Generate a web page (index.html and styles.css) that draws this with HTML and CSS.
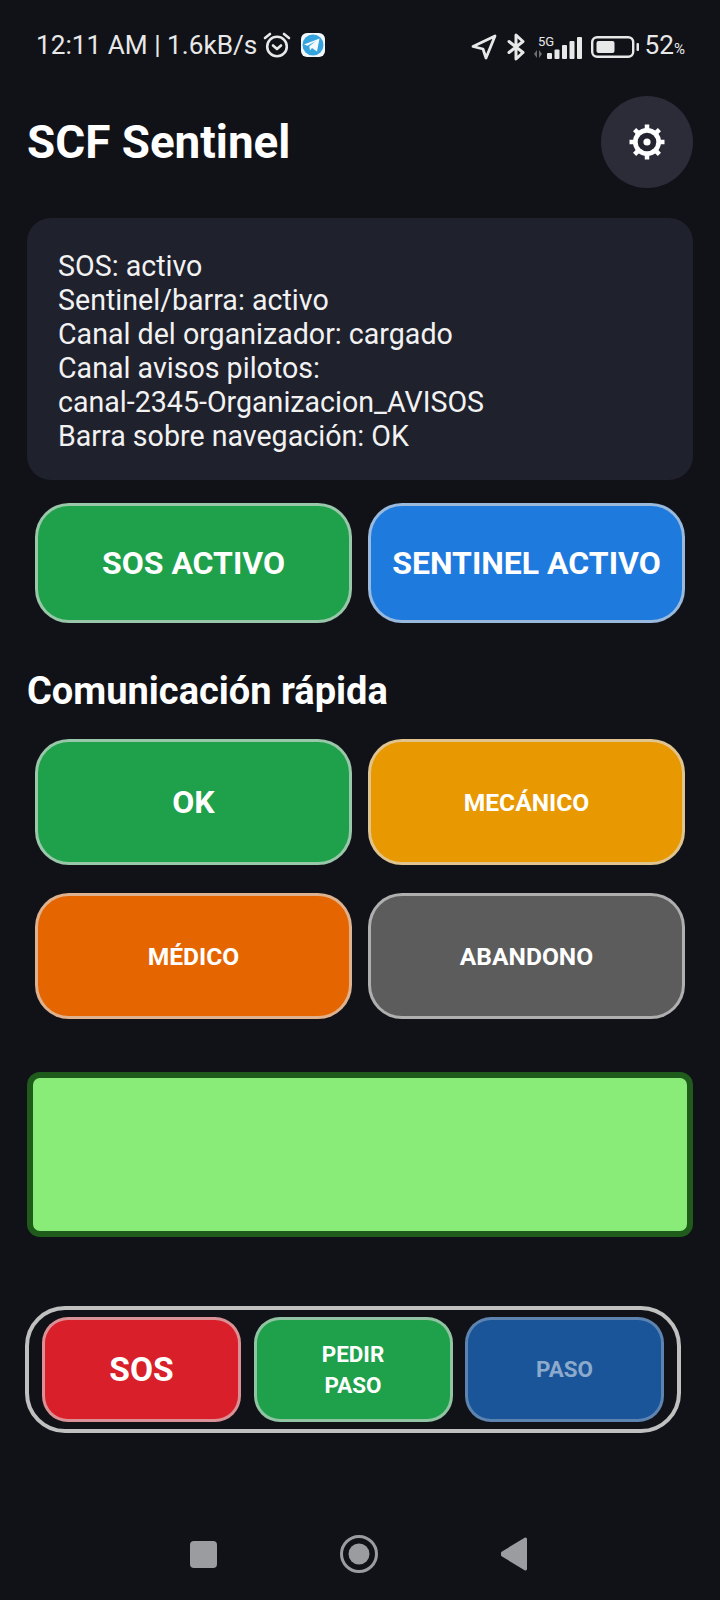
FILE: index.html
```html
<!DOCTYPE html>
<html lang="es">
<head>
	<meta charset="utf-8" />
	<title>SCF Sentinel</title>
	<link rel="stylesheet" href="styles.css">
</head>
<body>
<div class="statusBar">
	<div class="statusLeft">
		<span>12:11 AM | 1.6kB/s</span>
		<svg class="alarmIcon" width="28" height="26" viewBox="0 0 28 26" fill="none" stroke="#e8e8e8" stroke-width="2.600" stroke-linecap="round" stroke-linejoin="round">
			<circle cx="14" cy="14.500" r="9.800"/>
			<path d="M10 13.500l4 3.500 4-3.500"/>
			<path d="M2 6l5-4M26 6l-5-4"/>
		</svg>
		<svg class="telegramIcon" width="24" height="24" viewBox="0 0 24 24">
			<rect width="24" height="24" rx="6" fill="#f2f8fc"/>
			<circle cx="12" cy="12" r="10.500" fill="#35a3de"/>
			<path d="M3 11.500l15.500-6-2.500 13-5-3.500-2 2.500-.7-4.200 6.500-5.300-8.300 4.800z" fill="#f4fafd"/>
		</svg>
	</div>
	<div class="statusRight">
		<svg class="navArrow" width="26" height="26" viewBox="0 0 26 26" fill="none" stroke="#e8e8e8" stroke-width="2.800" stroke-linejoin="round">
			<path d="M2 12.500L24 2l-9 22-3-9z"/>
		</svg>
		<svg class="btIcon" width="18" height="28" viewBox="0 0 18 28" fill="none" stroke="#e8e8e8" stroke-width="3" stroke-linejoin="round" stroke-linecap="round">
			<path d="M2 8.500l14 11-7 6.500V2l7 6.500-14 11"/>
		</svg>
		<svg class="signalIcon" width="48" height="26" viewBox="0 0 48 26">
			<text x="4" y="12" class="fiveG">5G</text>
			<g fill="#6f6f6f"><path d="M0 20l3-4v8zM5 16l3 4-3 4z"/></g>
			<g fill="#e8e8e8">
				<rect x="13" y="19" width="5" height="6" rx="1"/><rect x="20.500" y="15.500" width="5" height="9.500" rx="1"/>
				<rect x="28" y="11" width="5" height="14" rx="1"/><rect x="35.500" y="7" width="5" height="18" rx="1"/><rect x="43" y="3" width="5" height="22" rx="1"/>
			</g>
		</svg>
		<svg class="batteryIcon" width="48" height="22" viewBox="0 0 48 22">
			<rect x="1.200" y="1.200" width="41" height="19.600" rx="5" fill="none" stroke="#e8e8e8" stroke-width="2.400"/>
			<rect x="5.500" y="5" width="18" height="12" rx="2" fill="#e8e8e8"/>
			<rect x="45.500" y="7" width="2.500" height="8" rx="1" fill="#e8e8e8"/>
		</svg>
		<span class="batteryText">52<small>%</small></span>
	</div>
</div>

<div class="header">
	<h1>SCF Sentinel</h1>
	<div class="settingsBtn">
		<svg width="36" height="36" viewBox="0 0 36 36">
			<g stroke="#fff" stroke-width="4.500">
				<path d="M18 0.500v35M0.500 18h35M5.600 5.600l24.800 24.800M30.400 5.600L5.600 30.400"/>
			</g>
			<circle cx="18" cy="18" r="14" fill="#fff"/>
			<circle cx="18" cy="18" r="9.300" fill="#23242f"/>
			<circle cx="18" cy="18" r="3.600" fill="#fff"/>
		</svg>
	</div>
</div>

<div class="infoPanel">
	<div>SOS: activo</div>
	<div>Sentinel/barra: activo</div>
	<div>Canal del organizador: cargado</div>
	<div>Canal avisos pilotos:</div>
	<div>canal-2345-Organizacion_AVISOS</div>
	<div>Barra sobre navegación: OK</div>
</div>

<div class="btnGrid statusBtns">
	<div class="btn green big">SOS ACTIVO</div>
	<div class="btn blue big">SENTINEL ACTIVO</div>
</div>

<h2>Comunicación rápida</h2>

<div class="btnGrid quickBtns">
	<div class="btn green big">OK</div>
	<div class="btn amber">MECÁNICO</div>
	<div class="btn orange">MÉDICO</div>
	<div class="btn gray">ABANDONO</div>
</div>

<div class="signalBox"></div>

<div class="bottomBar">
	<div class="barBtn red">SOS</div>
	<div class="barBtn green small">PEDIR<br>PASO</div>
	<div class="barBtn navy small">PASO</div>
</div>

<div class="navBar">
	<svg width="27" height="27" viewBox="0 0 27 27"><rect width="27" height="27" rx="4" fill="#9b9ca0"/></svg>
	<svg width="38" height="38" viewBox="0 0 38 38" fill="none">
		<circle cx="19" cy="19" r="17.500" stroke="#9b9ca0" stroke-width="3"/>
		<circle cx="19" cy="19" r="10.500" fill="#9b9ca0"/>
	</svg>
	<svg width="26" height="34" viewBox="0 0 26 34"><path d="M24.500 0.500a1.500 1.500 0 0 1 1.500 1.500v30a1.500 1.500 0 0 1-2.400 1.200L1 19.500a3 3 0 0 1 0-5L23.600 0.800z" fill="#9b9ca0"/></svg>
</div>
</body>
</html>
```

FILE: styles.css
```css
* {
	box-sizing: border-box;
}

body {
	margin: 0;
	width: 720px;
	height: 1600px;
	overflow: hidden;
	background-color: #111218;
	color: #fff;
	font-family: Roboto, "Liberation Sans", sans-serif;
}

/* phone status bar */
.statusBar {
	height: 88px;
	padding: 28px 35px 0 36px;
	display: flex;
	justify-content: space-between;
	align-items: flex-start;
	font-size: 26.200px;
	line-height: 34px;
	color: #e8e8e8;
}

.statusLeft, .statusRight {
	display: flex;
	align-items: center;
}

.statusLeft {
	gap: 6px;
}

.navArrow {
	margin-right: 1px;
}

.btIcon {
	margin-left: 9px;
}

.signalIcon {
	margin-left: 9px;
}

.batteryIcon {
	margin-left: 9px;
}

.batteryText {
	margin-left: 6px;
}

.statusRight small {
	font-size: 15px;
}

.fiveG {
	font: 13px Roboto, sans-serif;
	fill: #e8e8e8;
}

.telegramIcon {
	margin-left: 4px;
}

.header {
	height: 130px;
	padding: 8px 27px 0;
	display: flex;
	justify-content: space-between;
	align-items: flex-start;
}

h1 {
	margin: 0;
	padding-top: 21px;
	font-size: 45.800px;
	line-height: 52px;
	font-weight: 700;
}

.settingsBtn {
	width: 92px;
	height: 92px;
	border-radius: 50%;
	background-color: #2b2c38;
	display: flex;
	align-items: center;
	justify-content: center;
}

.infoPanel {
	margin: 0 27px;
	height: 262px;
	padding: 31px 31px 0 31px;
	border-radius: 24px;
	background-color: #1f212d;
	font-size: 28.600px;
	line-height: 34px;
	color: #f2f2f2;
}

.btnGrid {
	margin: 0 35px;
	display: grid;
	grid-template-columns: 317px 317px;
	column-gap: 16px;
}

.statusBtns {
	margin-top: 23px;
	grid-auto-rows: 120px;
}

.quickBtns {
	grid-auto-rows: 126px;
	row-gap: 28px;
}

.btn {
	display: flex;
	align-items: center;
	justify-content: center;
	border: 3px solid rgba(220, 220, 220, 0.65);
	border-radius: 34px;
	font-size: 24.600px;
	font-weight: 700;
}

.big {
	font-size: 32px;
}

.green {
	background-color: #1fa14b;
}

.blue {
	background-color: #1f7ade;
}

.amber {
	background-color: #e89800;
}

.orange {
	background-color: #e56500;
}

.gray {
	background-color: #5c5c5c;
}

h2 {
	margin: 0;
	padding: 46px 27px 26px;
	font-size: 38px;
	line-height: 44px;
	font-weight: 700;
}

.signalBox {
	margin: 53px 27px 0;
	height: 165px;
	border: 6px solid #1f5c1c;
	border-radius: 13px;
	background-color: #89ec78;
}

.bottomBar {
	margin: 69px 0 0 25px;
	width: 656px;
	height: 127px;
	padding: 7px 13px;
	border: 4px solid #c0c0c0;
	border-radius: 40px;
	display: flex;
	justify-content: space-between;
}

.barBtn {
	width: 199px;
	display: flex;
	align-items: center;
	justify-content: center;
	text-align: center;
	border: 3px solid rgba(220, 220, 220, 0.6);
	border-radius: 26px;
	font-size: 33.500px;
	font-weight: 700;
}

.barBtn.small {
	font-size: 22.400px;
	line-height: 31px;
}

.red {
	background-color: #d81f2a;
}

.navy {
	background-color: #1a5599;
	border-color: rgba(220, 220, 220, 0.35);
	color: rgba(255, 255, 255, 0.5);
}

.navBar {
	margin-top: 64px;
	height: 114px;
	padding: 0 193px 0 190px;
	display: flex;
	justify-content: space-between;
	align-items: center;
}
```
